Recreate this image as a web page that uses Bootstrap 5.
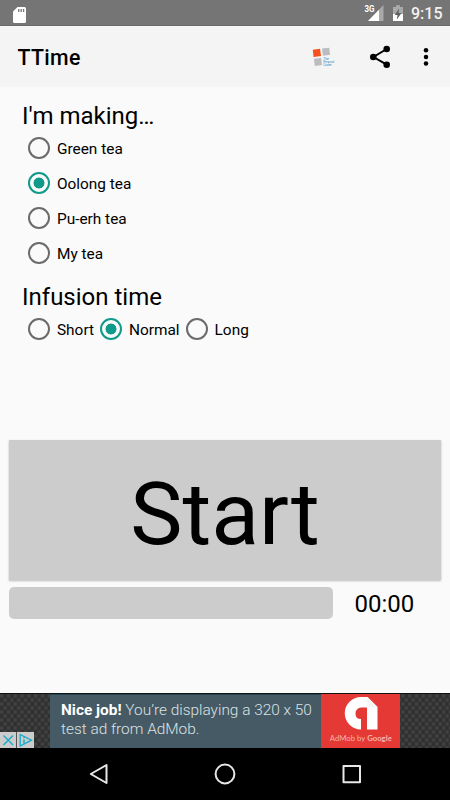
<!DOCTYPE html>
<html lang="en">
<head>
<meta charset="utf-8">
<meta name="viewport" content="width=device-width, initial-scale=1">
<title>TTime</title>
<link href="https://cdn.jsdelivr.net/npm/bootstrap@5.3.0/dist/css/bootstrap.min.css" rel="stylesheet">
<style>
body{width:450px;height:800px;background:#fafafa;color:#000;font-family:Roboto,"Liberation Sans",sans-serif;overflow:hidden}
svg{display:block;flex:none}
.status-strip{height:26px;background:#757575;color:#fff;padding:0 8px 0 13px;border-bottom:1px solid #6a6a6a}
.status-time{font-size:16px;font-weight:500;line-height:26px;color:#f2f2f2;width:31px;margin-left:7px;padding-top:3px;white-space:nowrap}
.app-strip{height:61px;background:#f4f4f4;padding:0 14px 0 17.5px}
.app-name{font-size:21.3px;font-weight:500;line-height:61px;letter-spacing:.35px;padding-top:2px}
.choices{height:353px;padding:13px 22px 0}
.section-title{font-size:24px;font-weight:400;line-height:32px;height:31px;margin:0;white-space:nowrap}
.section-title.second{margin-top:10px}
.option{height:35px;font-size:15.4px;line-height:35px;padding-left:6.3px;white-space:nowrap;gap:6.7px}
.option span{padding-top:1px}
.ring{appearance:none;width:22px;height:22px;margin:-1.5px 0 0;border:2.3px solid #6b6b6b;border-radius:50%;background:transparent;flex:none}
.ring:checked{border-color:#0f9a8b;background:radial-gradient(circle,#0f9a8b 5.1px,transparent 5.8px)}
.start-btn{height:140px;margin:0 8.7px;background:#ccc;color:#000;border-radius:0;font-size:88px;line-height:140px;padding:4px 0 0;border:0;box-shadow:0 .5px 2px rgba(0,0,0,.26)}
.timer-row{padding:7px 9px 0;height:113px}
.timer-track{width:323.5px;height:32px;background:#ccc;border-radius:5px}
.timer-text{font-size:24px;line-height:34px;margin-left:22px}
.ad-strip{height:55px;background:#303030;position:relative;border-top:1px solid #111}
.ad-copy{width:270.5px;background:#455a64;color:#dce2e5;font-size:15.4px;font-weight:300;line-height:18.5px;padding:6px 0 0 11px;white-space:nowrap;border-top:1px solid #244552}
.ad-copy b{font-weight:700;color:#fff}
.ad-logo{width:79.5px;background:#e53935}
.ad-marks{position:absolute;left:0;bottom:0}
.nav-strip{height:52px;background:#000}
</style>
<script src="https://cdn.jsdelivr.net/npm/bootstrap@5.3.0/dist/js/bootstrap.bundle.min.js"></script>
</head>
<body class="d-flex flex-column">
<div class="status-strip d-flex align-items-center flex-shrink-0">
  <svg width="13" height="16" viewBox="0 0 13 16" class="mt-1"><path d="M4.5 0H11.5Q13 0 13 1.5V14.5Q13 16 11.5 16H1.5Q0 16 0 14.5V4.5Z" fill="#fff"/><path d="M5.8 2v3M8.2 2v3M10.6 2v3" stroke="#757575" stroke-width="1.3"/></svg>
  <svg class="ms-auto" width="40" height="26" viewBox="364 0 40 26">
    <path d="M368 21 383.5 5V21Z" fill="#a9a9a9"/><path d="M368 21 379 9.7V21Z" fill="#fff"/>
    <text x="364.5" y="12" font-size="9" font-weight="700" fill="#fff" textLength="10" lengthAdjust="spacingAndGlyphs">3G</text>
    <path d="M393 7h3V5.2h4V7h3v14h-10Z" fill="#a9a9a9"/><path d="M393 14h10v7h-10Z" fill="#fff"/><path d="M399.2 8.5 394.7 15h2.8l-.7 4.5 4.7-6.6h-3Z" fill="#606060"/>
  </svg>
  <div class="status-time">9:15</div>
</div>
<nav class="app-strip d-flex align-items-center flex-shrink-0">
  <div class="app-name">TTime</div>
  <svg class="ms-auto" width="126" height="61" viewBox="310 26 126 61">
    <path d="m312.7 49.7 7.3-1 1 7.4-7.4 1Z" fill="#f4511e"/><path d="m322 48.6 7.2-.9.9 7.1-7.2 1ZM313.9 58.8l7.2-.9.9 7-7.2 1Z" fill="#bbbcc0"/>
    <g fill="#3a8ac2" font-size="3"><text x="323.2" y="59.7" textLength="5.5" lengthAdjust="spacingAndGlyphs">The</text><text x="323.2" y="62.8" textLength="11" lengthAdjust="spacingAndGlyphs">Personal</text><text x="323.2" y="65.9" textLength="8.5" lengthAdjust="spacingAndGlyphs">Coder</text></g>
    <path d="M386.7 49 373.5 57 386.7 64.7" fill="none" stroke="#000" stroke-width="2"/><circle cx="386.7" cy="49" r="3.3"/><circle cx="373.3" cy="57" r="3.3"/><circle cx="386.7" cy="64.7" r="3.3"/>
    <circle cx="426" cy="50.2" r="2.25"/><circle cx="426" cy="57" r="2.25"/><circle cx="426" cy="63.5" r="2.25"/>
  </svg>
</nav>
<main class="flex-shrink-0">
  <form class="choices">
    <h2 class="section-title">I'm making…</h2>
    <label class="option d-flex align-items-center"><input class="ring" type="radio" name="tea"><span>Green tea</span></label>
    <label class="option d-flex align-items-center"><input class="ring" type="radio" name="tea" checked><span>Oolong tea</span></label>
    <label class="option d-flex align-items-center"><input class="ring" type="radio" name="tea"><span>Pu-erh tea</span></label>
    <label class="option d-flex align-items-center"><input class="ring" type="radio" name="tea"><span>My tea</span></label>
    <h2 class="section-title second">Infusion time</h2>
    <div class="d-flex">
      <label class="option d-flex align-items-center"><input class="ring" type="radio" name="time"><span>Short</span></label>
      <label class="option d-flex align-items-center"><input class="ring" type="radio" name="time" checked><span>Normal</span></label>
      <label class="option d-flex align-items-center"><input class="ring" type="radio" name="time"><span>Long</span></label>
    </div>
  </form>
  <div class="d-grid"><button class="btn start-btn" type="button">Start</button></div>
  <div class="timer-row d-flex align-items-start"><div class="timer-track"></div><div class="timer-text">00:00</div></div>
</main>
<div class="ad-strip d-flex justify-content-center flex-shrink-0">
  <svg class="position-absolute top-0 start-0" width="450" height="54"><defs><pattern id="mesh" width="6.8" height="8" patternUnits="userSpaceOnUse"><rect width="6.8" height="8" fill="#303030"/><circle cx="1.7" cy="2" r="1.9" fill="#414141"/><circle cx="5.1" cy="6" r="1.9" fill="#414141"/></pattern></defs><rect width="450" height="54" fill="url(#mesh)"/></svg>
  <div class="ad-copy position-relative"><b>Nice job!</b> You’re displaying a 320 x 50<br>test ad from AdMob.</div>
  <div class="ad-logo position-relative">
    <svg width="79.5" height="54" viewBox="320.5 694 79.5 54"><path d="M360.5 729.5A16.2 16.2 0 0 1 360.5 697H367L377 707V729.5H366.5V707.5H361A5.7 5.7 0 0 0 355 713.5Q355 719 360.5 719Z" fill="#fff"/><path d="M367 697 377 707H367Z" fill="#f5f5f5"/>
    <text x="329.3" y="741" font-size="8.2" fill="#f7b3b1" textLength="62" lengthAdjust="spacingAndGlyphs" font-family="Lato">AdMob by <tspan font-weight="700">Google</tspan></text></svg>
  </div>
  <svg class="ad-marks" width="34" height="16" viewBox="0 0 34 16"><path d="M0 0h34v16H0z" fill="#ccc"/><path d="M16.5 0v16" stroke="#555"/><path d="M3.5 3.5l9.5 9.5M13 3.5 3.5 13" stroke="#13a9c8" stroke-width="1.3"/><path d="M20.2 2.5 31.5 8.2 20.2 14Z" fill="none" stroke="#13a9c8" stroke-width="1.3"/><path d="M24 7.3v4.3M24 4.8v1.3" stroke="#13a9c8" stroke-width="1.4"/></svg>
</div>
<div class="nav-strip flex-shrink-0">
  <svg width="450" height="52" viewBox="0 748 450 52" fill="none" stroke="#e8e8e8" stroke-width="2" stroke-linejoin="round"><path d="M90.8 774 106.5 765V783Z"/><circle cx="225" cy="774" r="9.4"/><rect x="343.5" y="766" width="16.5" height="16.3"/></svg>
</div>
</body>
</html>
